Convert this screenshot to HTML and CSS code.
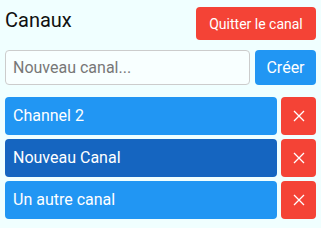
FILE: index.html
```html
<!DOCTYPE html>
<html lang="fr">
<head>
    <meta charset="UTF-8">
    <meta name="viewport" content="width=device-width, initial-scale=1.0">
    <title>Canaux</title>
    <link rel="stylesheet" href="styles.css">
</head>
<body>
    <div class="channels">
        <div class="channels-header">
            <h2>Canaux</h2>
            <button class="leave-btn">Quitter le canal</button>
        </div>

        <form class="new-channel">
            <input type="text" placeholder="Nouveau canal...">
            <button type="submit" class="create-btn">Créer</button>
        </form>

        <ul class="channel-list">
            <li class="channel-row">
                <div class="channel-name">Channel 2</div>
                <button class="delete-btn" title="Supprimer">
                    <svg width="12" height="12" viewBox="0 0 12 12"><path d="M1 1L11 11M11 1L1 11" stroke="#fff" stroke-width="1.3" fill="none"/></svg>
                </button>
            </li>
            <li class="channel-row">
                <div class="channel-name active">Nouveau Canal</div>
                <button class="delete-btn" title="Supprimer">
                    <svg width="12" height="12" viewBox="0 0 12 12"><path d="M1 1L11 11M11 1L1 11" stroke="#fff" stroke-width="1.3" fill="none"/></svg>
                </button>
            </li>
            <li class="channel-row">
                <div class="channel-name">Un autre canal</div>
                <button class="delete-btn" title="Supprimer">
                    <svg width="12" height="12" viewBox="0 0 12 12"><path d="M1 1L11 11M11 1L1 11" stroke="#fff" stroke-width="1.3" fill="none"/></svg>
                </button>
            </li>
        </ul>
    </div>
</body>
</html>
```

FILE: styles.css
```css
* {
    margin: 0;
    padding: 0;
    box-sizing: border-box;
}

body {
    font-family: Roboto, "Noto Sans", sans-serif;
    background: #f0ffff;
    padding: 7px 5px;
}

.channels-header {
    display: flex;
    justify-content: space-between;
    align-items: flex-start;
}

.channels-header h2 {
    font-size: 20px;
    font-weight: 400;
    color: #111;
    margin-top: 1px;
}

button {
    font-family: inherit;
    border: none;
    border-radius: 4px;
    color: white;
    cursor: pointer;
}

.leave-btn {
    background: #f44336;
    font-size: 14px;
    height: 33px;
    width: 120px;
}

.new-channel {
    display: flex;
    gap: 5px;
    margin-top: 10px;
}

.new-channel input {
    flex: 1;
    min-width: 0;
    height: 35px;
    padding: 0 7px;
    border: 1px solid #ccc;
    border-radius: 4px;
    font-family: inherit;
    font-size: 16px;
    background: #f8ffff;
}

.new-channel input::placeholder {
    color: #777;
}

.create-btn {
    background: #2196f3;
    font-size: 16px;
    width: 61px;
    height: 35px;
}

.channel-list {
    list-style: none;
    margin-top: 12px;
    display: flex;
    flex-direction: column;
    gap: 4px;
}

.channel-row {
    display: flex;
    gap: 4px;
}

.channel-name {
    flex: 1;
    height: 38px;
    line-height: 38px;
    padding: 0 8px;
    background: #2196f3;
    color: white;
    font-size: 16px;
    border-radius: 4px;
}

.channel-name.active {
    background: #1565c0;
}

.delete-btn {
    width: 35px;
    height: 38px;
    background: #f44336;
    display: flex;
    align-items: center;
    justify-content: center;
}
```
